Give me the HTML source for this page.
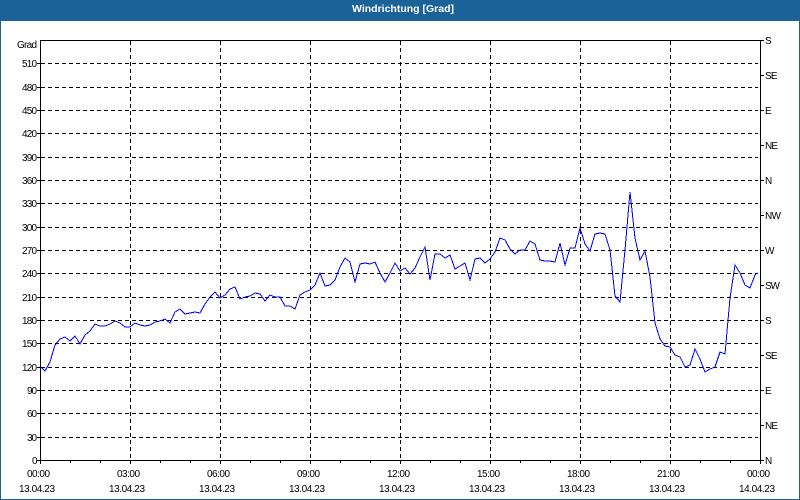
<!DOCTYPE html>
<html lang="de">
<head>
<meta charset="utf-8">
<title>Windrichtung</title>
<style>
html,body{margin:0;padding:0;background:#fff;width:800px;height:500px;overflow:hidden}
svg{display:block}
text{font-family:"Liberation Sans",sans-serif;font-size:10px;fill:#000}
.t{font-weight:bold;fill:#fff;font-size:10.5px}
</style>
</head>
<body>
<svg width="800" height="500" viewBox="0 0 800 500" xmlns="http://www.w3.org/2000/svg">
<rect x="0" y="0" width="800" height="500" fill="#1b6298"/>
<rect x="1" y="21" width="798" height="478" fill="#fff"/>
<text class="t" x="352" y="12" textLength="102">Windrichtung [Grad]</text>

<g stroke="#000" stroke-width="1" stroke-dasharray="4 3" shape-rendering="crispEdges" fill="none">
<path d="M41 63.5H758M41 87.5H758M41 110.5H758M41 133.5H758M41 157.5H758M41 180.5H758M41 203.5H758M41 227.5H758M41 250.5H758M41 273.5H758M41 297.5H758M41 320.5H758M41 343.5H758M41 367.5H758M41 390.5H758M41 413.5H758M41 437.5H758"/>
<path d="M130.5 41V460M220.5 41V460M310.5 41V460M400.5 41V460M490.5 41V460M580.5 41V460M670.5 41V460"/>
</g>

<polyline fill="none" stroke="#0000ff" stroke-width="1" shape-rendering="crispEdges" points="40,366 45,371 50,362 55,345 60,339 65,337 70,341 75,336 80,344 85,335 90,331 95,324 100,326 105,326 110,324 115,321 120,323 125,327 130,327 135,323 140,325 145,326 150,325 155,322 160,321 165,319 170,323 175,312 180,309 185,314 190,313 195,312 200,313 205,304 210,297 215,292 220,298 225,295 230,289 235,287 240,299 245,297 250,296 255,293 260,294 265,301 270,295 275,297 280,297 285,306 290,306 295,309 300,295 305,292 310,290 315,285 320,273 325,286 330,285 335,280 340,267 345,258 350,262 355,282 360,264 365,263 370,264 375,262 380,273 385,282 390,273 395,263 400,271 405,268 410,274 415,268 420,257 425,247 430,280 435,254 440,254 445,258 450,255 455,269 460,266 465,263 470,280 475,259 480,258 485,263 490,259 495,252 500,238 505,240 510,249 515,254 520,250 525,250 530,241 535,244 540,260 545,261 550,261 555,262 560,243 565,265 570,248 575,248 580,228 585,244 590,251 595,234 600,233 605,234 610,250 615,296 620,302 625,250 630,192 635,238 640,260 645,251 650,277 655,323 660,339 665,346 670,347 675,355 680,357 685,367 690,365 695,349 700,359 705,372 710,369 715,367 720,352 725,354 730,298 735,265 740,273 745,285 750,288 755,275 757,273"/>

<g stroke="#000" stroke-width="1" shape-rendering="crispEdges" fill="none">
<path d="M40.5 40V461M760.5 40V461M40 40.5H761M40 460.5H761"/>
<path d="M37 63.5H40M37 87.5H40M37 110.5H40M37 133.5H40M37 157.5H40M37 180.5H40M37 203.5H40M37 227.5H40M37 250.5H40M37 273.5H40M37 297.5H40M37 320.5H40M37 343.5H40M37 367.5H40M37 390.5H40M37 413.5H40M37 437.5H40M37 460.5H40"/>
<path d="M761 40.5H764M761 75.5H764M761 110.5H764M761 145.5H764M761 180.5H764M761 215.5H764M761 250.5H764M761 285.5H764M761 320.5H764M761 355.5H764M761 390.5H764M761 425.5H764M761 460.5H764"/>
<path d="M70.5 461V463M100.5 461V463M130.5 461V464M160.5 461V463M190.5 461V463M220.5 461V464M250.5 461V463M280.5 461V463M310.5 461V464M340.5 461V463M370.5 461V463M400.5 461V464M430.5 461V463M460.5 461V463M490.5 461V464M520.5 461V463M550.5 461V463M580.5 461V464M610.5 461V463M640.5 461V463M670.5 461V464M700.5 461V463M730.5 461V463M40.5 461V464M760.5 461V464"/>
</g>

<g>
<text x="17" y="48" textLength="20">Grad</text>
<text x="22" y="67" textLength="15">510</text>
<text x="22" y="91" textLength="15">480</text>
<text x="22" y="114" textLength="15">450</text>
<text x="22" y="137" textLength="15">420</text>
<text x="22" y="161" textLength="15">390</text>
<text x="22" y="184" textLength="15">360</text>
<text x="22" y="207" textLength="15">330</text>
<text x="22" y="231" textLength="15">300</text>
<text x="22" y="254" textLength="15">270</text>
<text x="22" y="277" textLength="15">240</text>
<text x="22" y="301" textLength="15">210</text>
<text x="22" y="324" textLength="15">180</text>
<text x="22" y="347" textLength="15">150</text>
<text x="22" y="371" textLength="15">120</text>
<text x="27" y="394" textLength="10">90</text>
<text x="27" y="417" textLength="10">60</text>
<text x="27" y="441" textLength="10">30</text>
<text x="32" y="464" textLength="5">0</text>
</g>

<g>
<text x="765" y="44">S</text>
<text x="765" y="79" textLength="12.5">SE</text>
<text x="765" y="114">E</text>
<text x="765" y="149" textLength="13">NE</text>
<text x="765" y="184">N</text>
<text x="765" y="219" textLength="16">NW</text>
<text x="765" y="254">W</text>
<text x="765" y="289" textLength="15">SW</text>
<text x="765" y="324">S</text>
<text x="765" y="359" textLength="12.5">SE</text>
<text x="765" y="394">E</text>
<text x="765" y="429" textLength="13">NE</text>
<text x="765" y="464">N</text>
</g>

<g>
<text x="27" y="477" textLength="23">00:00</text>
<text x="117" y="477" textLength="23">03:00</text>
<text x="207" y="477" textLength="23">06:00</text>
<text x="297" y="477" textLength="23">09:00</text>
<text x="387" y="477" textLength="23">12:00</text>
<text x="477" y="477" textLength="23">15:00</text>
<text x="567" y="477" textLength="23">18:00</text>
<text x="657" y="477" textLength="23">21:00</text>
<text x="747" y="477" textLength="23">00:00</text>
<text x="19" y="492" textLength="36">13.04.23</text>
<text x="109" y="492" textLength="36">13.04.23</text>
<text x="199" y="492" textLength="36">13.04.23</text>
<text x="289" y="492" textLength="36">13.04.23</text>
<text x="379" y="492" textLength="36">13.04.23</text>
<text x="469" y="492" textLength="36">13.04.23</text>
<text x="559" y="492" textLength="36">13.04.23</text>
<text x="649" y="492" textLength="36">13.04.23</text>
<text x="739" y="492" textLength="36">14.04.23</text>
</g>
</svg>
</body>
</html>
